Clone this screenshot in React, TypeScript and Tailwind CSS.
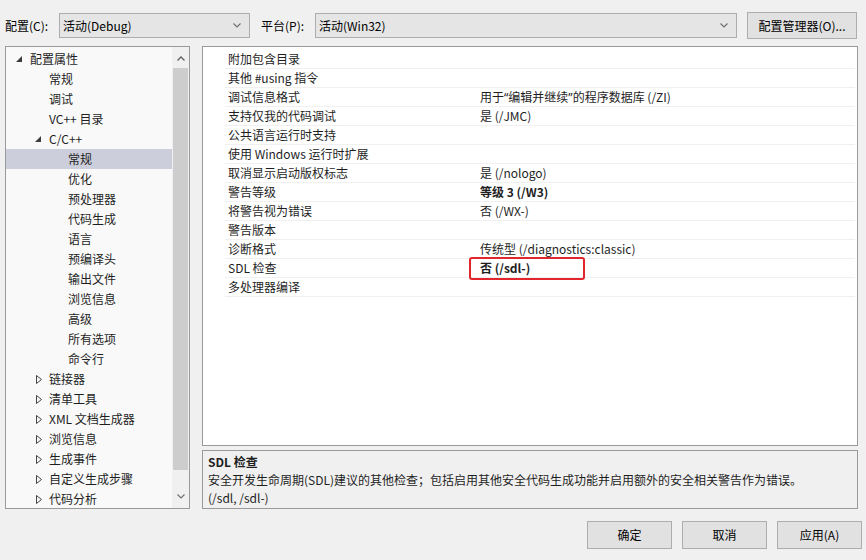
import React from "react";

const FONT = { fontFamily: '"Noto Sans CJK SC", "Noto Sans", sans-serif' };
const LATIN = { fontFamily: '"Noto Sans", sans-serif' };

type TreeNode = {
  label: string;
  level: number;
  state?: "open" | "closed";
  selected?: boolean;
};

const tree: TreeNode[] = [
  { label: "配置属性", level: 0, state: "open" },
  { label: "常规", level: 1 },
  { label: "调试", level: 1 },
  { label: "VC++ 目录", level: 1 },
  { label: "C/C++", level: 1, state: "open" },
  { label: "常规", level: 2, selected: true },
  { label: "优化", level: 2 },
  { label: "预处理器", level: 2 },
  { label: "代码生成", level: 2 },
  { label: "语言", level: 2 },
  { label: "预编译头", level: 2 },
  { label: "输出文件", level: 2 },
  { label: "浏览信息", level: 2 },
  { label: "高级", level: 2 },
  { label: "所有选项", level: 2 },
  { label: "命令行", level: 2 },
  { label: "链接器", level: 1, state: "closed" },
  { label: "清单工具", level: 1, state: "closed" },
  { label: "XML 文档生成器", level: 1, state: "closed" },
  { label: "浏览信息", level: 1, state: "closed" },
  { label: "生成事件", level: 1, state: "closed" },
  { label: "自定义生成步骤", level: 1, state: "closed" },
  { label: "代码分析", level: 1, state: "closed" },
];

type Prop = { name: string; value?: React.ReactNode; bold?: boolean };

const props: Prop[] = [
  { name: "附加包含目录" },
  { name: "其他 #using 指令" },
  {
    name: "调试信息格式",
    value: (
      <>
        用于<span style={LATIN}>“</span>编辑并继续<span style={LATIN}>”</span>的程序数据库 (/ZI)
      </>
    ),
  },
  { name: "支持仅我的代码调试", value: "是 (/JMC)" },
  { name: "公共语言运行时支持" },
  { name: "使用 Windows 运行时扩展" },
  { name: "取消显示启动版权标志", value: "是 (/nologo)" },
  { name: "警告等级", value: "等级 3 (/W3)", bold: true },
  { name: "将警告视为错误", value: "否 (/WX-)" },
  { name: "警告版本" },
  { name: "诊断格式", value: "传统型 (/diagnostics:classic)" },
  { name: "SDL 检查", value: "否 (/sdl-)", bold: true },
  { name: "多处理器编译" },
];

function ChevronDown({ className = "" }: { className?: string }) {
  return (
    <svg width="8" height="5" viewBox="0 0 8 5" className={className}>
      <polyline points="0.5,0.5 4,4 7.5,0.5" fill="none" stroke="#6d6d6d" strokeWidth="1.1" />
    </svg>
  );
}

function ChevronUp({ className = "" }: { className?: string }) {
  return (
    <svg width="8" height="5" viewBox="0 0 8 5" className={className}>
      <polyline points="0.5,4.5 4,1 7.5,4.5" fill="none" stroke="#606060" strokeWidth="1.3" />
    </svg>
  );
}

function Combo({ text, width }: { text: string; width: string }) {
  return (
    <div
      className={`${width} h-[25px] flex items-center justify-between border border-[#adadad] bg-[#e5e5e5] pl-[3px] pr-[8px] text-[12px] text-black`}
    >
      <span className="leading-[23px]">{text}</span>
      <ChevronDown />
    </div>
  );
}

function Expander({ state }: { state: "open" | "closed" }) {
  if (state === "open") {
    return (
      <svg width="6" height="6" viewBox="0 0 6 6">
        <polygon points="6,0 6,6 0,6" fill="#3c3c3c" />
      </svg>
    );
  }
  return (
    <svg width="6" height="9" viewBox="0 0 6 9">
      <polygon points="0.5,0.5 5.5,4.5 0.5,8.5" fill="none" stroke="#444" strokeWidth="1" />
    </svg>
  );
}

function TreeRow({ node }: { node: TreeNode }) {
  const textLeft = 24 + node.level * 19;
  return (
    <div
      className={`relative h-[20px] flex items-center text-[12px] text-[#1e1e1e] ${
        node.selected ? "bg-[#cccedb]" : ""
      }`}
    >
      {node.state && (
        <span
          className="absolute flex items-center"
          style={{ left: textLeft - 14 + (node.state === "closed" ? 1 : 0) }}
        >
          <Expander state={node.state} />
        </span>
      )}
      <span className="leading-[20px] whitespace-nowrap" style={{ paddingLeft: textLeft }}>
        {node.label}
      </span>
    </div>
  );
}

function Button({ text }: { text: string }) {
  return (
    <div className="w-[85px] h-[28px] flex items-center justify-center border border-[#adadad] bg-[#e1e1e1] text-[12px] text-black">
      {text}
    </div>
  );
}

export default function App() {
  return (
    <div className="w-[866px] h-[560px] bg-[#f0f0f0] overflow-hidden" style={FONT}>
      {/* configuration / platform selectors */}
      <div className="flex items-center h-[27px] mt-[12px] pl-[5px] text-[12px] text-black">
        <span className="w-[54px] whitespace-nowrap">配置(C):</span>
        <Combo text="活动(Debug)" width="w-[191px]" />
        <span className="ml-[11px] w-[54px] whitespace-nowrap">平台(P):</span>
        <Combo text="活动(Win32)" width="w-[422px]" />
        <div className="ml-[10px] w-[110px] h-[27px] flex items-center justify-center border border-[#adadad] bg-[#e1e1e1]">
          配置管理器(O)...
        </div>
      </div>

      {/* tree + property grid */}
      <div className="flex mt-[7px] pl-[5px]">
        <div className="w-[185px] h-[463px] border border-[#9a9a9a] bg-[#f9f9f9] flex">
          <div className="flex-1 pt-[2px]">
            {tree.map((n, i) => (
              <TreeRow key={i} node={n} />
            ))}
          </div>
          <div className="w-[17px] flex flex-col bg-[#f0f0f0]">
            <div className="h-[21px] flex items-center justify-center pt-[2px]">
              <ChevronUp />
            </div>
            <div className="mx-[1px] h-[402px] bg-[#cdcdcd]" />
            <div className="flex-1" />
            <div className="h-[20px] flex items-center justify-center pb-[4px]">
              <ChevronDown />
            </div>
          </div>
        </div>

        <div className="ml-[12px] w-[656px] flex flex-col">
          <div className="relative h-[400px] border border-[#9a9a9a] bg-white pt-[3px] pr-[2px]">
            {props.map((p, i) => (
              <div key={i} className="flex h-[19px] text-[12px] text-[#1e1e1e]">
                <div className="w-[22px]" />
                <div className="w-[251px] border-b border-[#f0f0f0] pl-[3px] leading-[18px] whitespace-nowrap">
                  {p.name}
                </div>
                <div
                  className={`flex-1 border-b border-[#f0f0f0] pl-[4px] leading-[18px] whitespace-nowrap ${
                    p.bold ? "font-bold" : ""
                  }`}
                >
                  {p.value ?? ""}
                </div>
              </div>
            ))}
            <div className="absolute left-[266px] top-[210px] w-[116px] h-[23px] border-2 border-[#e3262b] rounded-[3px]" />
          </div>

          <div className="mt-[4px] h-[59px] border border-[#9a9a9a] bg-[#f0f0f0] pl-[5px] pt-[2px] text-[12px] text-[#1e1e1e]">
            <div className="leading-[18px] font-bold">SDL 检查</div>
            <div className="leading-[18px] whitespace-nowrap">
              安全开发生命周期(SDL)建议的其他检查；包括启用其他安全代码生成功能并启用额外的安全相关警告作为错误。
            </div>
            <div className="leading-[18px]">(/sdl, /sdl-)</div>
          </div>
        </div>
      </div>

      {/* dialog buttons */}
      <div className="flex justify-end gap-[10px] mt-[12px] pr-[4px]">
        <Button text="确定" />
        <Button text="取消" />
        <Button text="应用(A)" />
      </div>
    </div>
  );
}
